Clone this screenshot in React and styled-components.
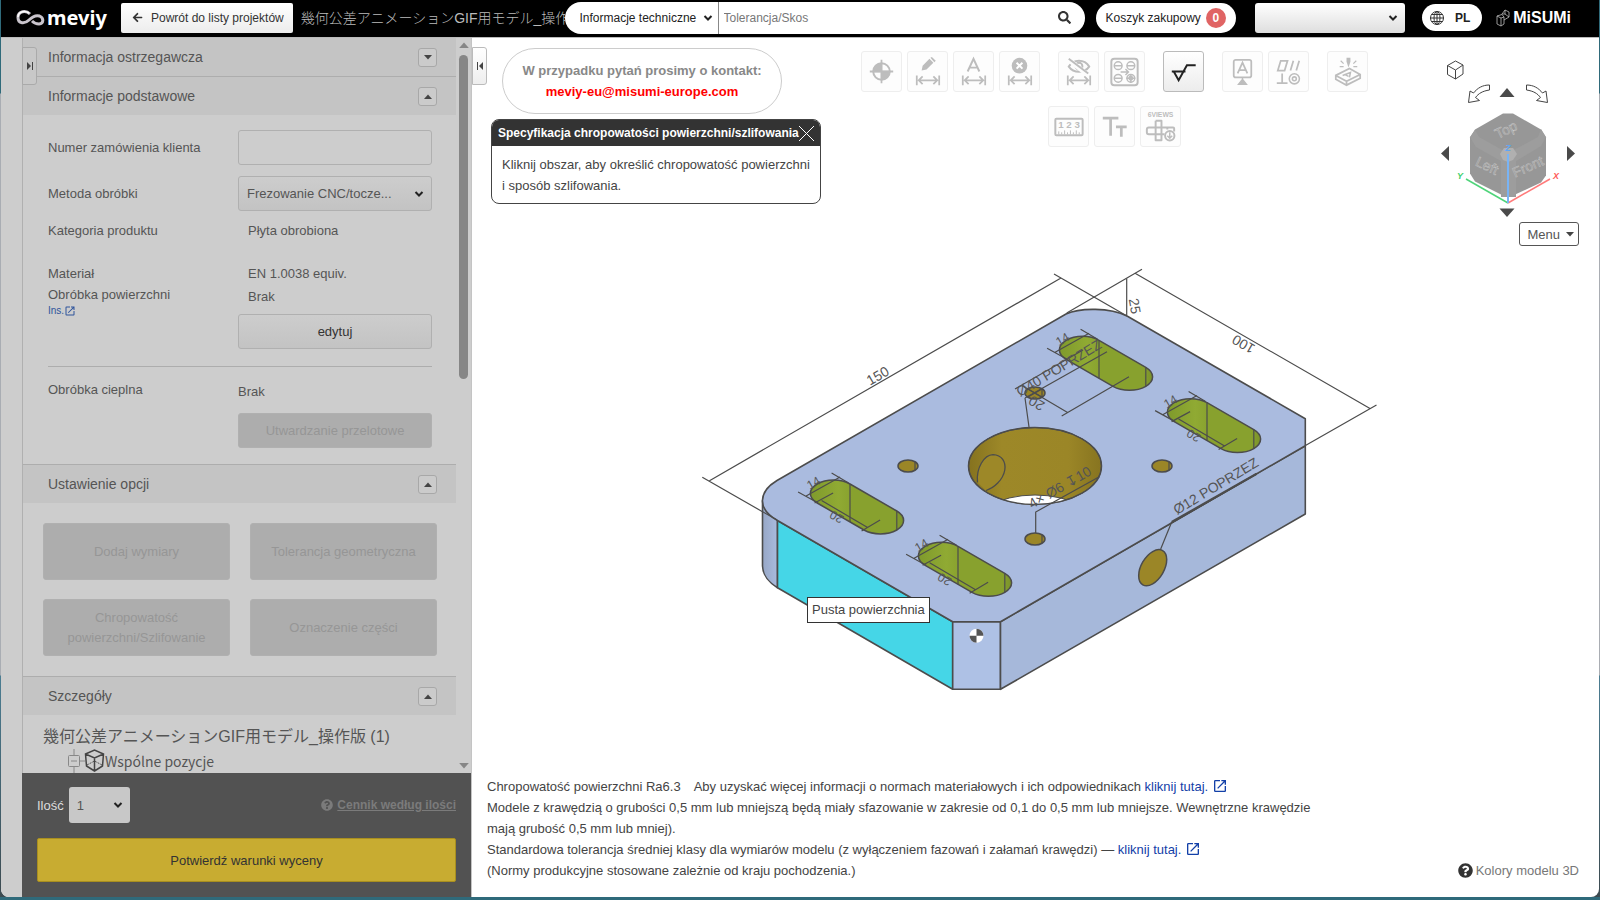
import React from "react";
import styled, { createGlobalStyle } from "styled-components";
import { FaArrowLeft, FaSearch, FaQuestionCircle } from "react-icons/fa";
import { MdOpenInNew } from "react-icons/md";

const GlobalStyle = createGlobalStyle`
  * {
    box-sizing: border-box;
  }
  body {
    margin: 0;
    background: linear-gradient(#2f6a7a 0, #2f6a7a 93px, #a9adb3 94px, #a9adb3 675px, #4b7d92 676px, #3c4a50 100%);
    font-family: "Liberation Sans", Arial, "Noto Sans CJK JP", sans-serif;
    font-size: 13px;
    color: #444;
  }
  button, input, select {
    font-family: inherit;
    font-size: inherit;
    margin: 0;
  }
`;

// Window
const Window = styled.div`
  display: flex;
  flex-direction: column;
  height: calc(100vh - 3px);
  margin: 0 1px;
  background: #fff;
  border-radius: 0 0 8px 8px;
  overflow: hidden;
`;

const Body = styled.div`
  display: flex;
  flex: 1;
  min-height: 0;
`;

// Header
const Header = styled.header`
  display: flex;
  align-items: center;
  height: 38px;
  padding: 0 28px 2px 15px;
  background: #000;
  border-bottom: 1px solid #bbb;
  font-size: 12px;
`;

const Logo = styled.div`
  display: flex;
  align-items: center;
  gap: 2px;
  width: 105px;
  color: #fff;
  font: bold 20px/30px "Noto Sans", sans-serif;
`;

const BackButton = styled.button`
  display: flex;
  align-items: center;
  gap: 8px;
  height: 30px;
  padding: 0 9px 0 11px;
  border: 0;
  border-radius: 2px;
  background: linear-gradient(#fff, #ececec);
  color: #333;
  white-space: nowrap;
`;

const ProjectName = styled.div`
  flex: 1;
  min-width: 0;
  margin-left: 8px;
  overflow: hidden;
  white-space: nowrap;
  font-weight: 300;
  font-size: 14px;
  line-height: 30px;
  color: #bbb;
`;

const SearchBox = styled.div`
  display: flex;
  align-items: center;
  width: 520px;
  height: 32px;
  padding-right: 14px;
  border-radius: 16px;
  background: #fff;
  color: #333;
`;

const SearchInput = styled.input`
  flex: 1;
  height: 32px;
  padding: 0 5px;
  border: 0;
  border-left: 1px solid #888;
  background: transparent;
  &::placeholder {
    color: #777;
  }
`;

const IconButton = styled.button`
  display: flex;
  padding: 0;
  border: 0;
  background: transparent;
  color: #333;
`;

const CartButton = styled.button`
  display: flex;
  align-items: center;
  gap: 5px;
  height: 30px;
  margin-left: 11px;
  padding: 0 10px;
  border: 0;
  border-radius: 15px;
  background: #fff;
  color: #222;
`;

const Badge = styled.span`
  width: 20px;
  height: 20px;
  border-radius: 10px;
  background: #e06464;
  color: #fff;
  font-weight: bold;
  line-height: 20px;
  text-align: center;
`;

const LangButton = styled.button`
  display: flex;
  align-items: center;
  gap: 11px;
  height: 27px;
  margin: 0 14px 0 17px;
  padding: 0 12px 0 8px;
  border: 0;
  border-radius: 14px;
  background: #fff;
  color: #222;
  font-weight: bold;
`;

const Brand = styled.div`
  display: flex;
  align-items: center;
  gap: 3px;
  color: #fff;
  font-size: 16px;
  font-weight: bold;
  line-height: 30px;
`;

// Drop-down with its own chevron
const SelectWrap = styled.span`
  display: grid;
  align-items: center;
  width: ${(p) => p.$width};
  margin-left: ${(p) => p.$left || "0"};
  select,
  svg {
    grid-area: 1 / 1;
  }
  svg {
    justify-self: end;
    margin-right: ${(p) => p.$chevron || "7px"};
    pointer-events: none;
  }
`;

const SelectField = styled.select`
  appearance: none;
  width: 100%;
  height: ${(p) => p.$height || "36px"};
  padding: 0 8px 0 ${(p) => p.$indent || "8px"};
  border: ${(p) => (p.$plain ? "0" : "1px solid #b0b0b0")};
  border-radius: 3px;
  background: ${(p) => p.$bg || "linear-gradient(#cdcdcd, #c3c3c3)"};
  color: ${(p) => p.$color || "#555"};
`;

// Sidebar
const Sidebar = styled.aside`
  display: flex;
  flex-direction: column;
  width: 471px;
  padding-left: 21px;
  background: #cdcdcd;
  border-right: 1px solid #c4c4c4;
  color: #555;
`;

const SidebarScroll = styled.div`
  display: flex;
  flex: 1;
  min-height: 0;
  overflow: hidden;
`;

const Panel = styled.div`
  position: relative;
  flex: 1;
  border-left: 1px solid #b0b0b0;
`;

const ScrollTrack = styled.div`
  display: flex;
  flex-direction: column;
  align-items: center;
  justify-content: space-between;
  width: 15px;
  padding: 4px 0;
`;

const ScrollThumb = styled.div`
  width: 9px;
  height: 324px;
  margin: 7px 0 auto;
  border-radius: 5px;
  background: #868686;
`;

const FoldTab = styled.button`
  position: absolute;
  top: 9px;
  left: ${(p) => (p.$dark ? "-1px" : "0")};
  z-index: 1;
  display: flex;
  align-items: center;
  justify-content: center;
  width: 15px;
  height: 38px;
  padding: 0;
  border: 1px solid ${(p) => (p.$dark ? "#aaa" : "#bbb")};
  border-radius: 0 3px 3px 0;
  background: ${(p) => (p.$dark ? "#c8c8c8" : "linear-gradient(#fff, #eee)")};
`;

const SectionHead = styled.h2`
  display: flex;
  align-items: center;
  justify-content: space-between;
  height: ${(p) => (p.$line ? "39px" : "38px")};
  margin: 0;
  padding: 0 19px 0 25px;
  border-top: ${(p) => (p.$line ? "1px solid #adadad" : "0")};
  background: #c4c4c4;
  font-size: 14px;
  font-weight: normal;
`;

const FoldButton = styled.button`
  display: flex;
  align-items: center;
  justify-content: center;
  width: 19px;
  height: 19px;
  padding: 0;
  border: 1px solid #a8a8a8;
  border-radius: 3px;
  background: #cbcbcb;
`;

const Form = styled.div`
  display: flex;
  flex-direction: column;
  padding: 15px 24px 16px 25px;
`;

const Row = styled.div`
  display: grid;
  grid-template-columns: 190px 1fr;
  align-items: ${(p) => (p.$top ? "start" : "center")};
  min-height: ${(p) => p.$height};
  margin-bottom: ${(p) => p.$gap || "0"};
  line-height: 21px;
`;

const Value = styled.div`
  padding-left: ${(p) => (p.$flush ? "0" : "10px")};
`;

const ValueStack = styled.div`
  display: flex;
  flex-direction: column;
  gap: ${(p) => p.$gap};
  padding-top: 2px;
`;

const TextInput = styled.input`
  width: 100%;
  height: 35px;
  padding: 0 8px;
  border: 1px solid #b0b0b0;
  border-radius: 3px;
  background: #cdcdcd;
`;

const Button = styled.button`
  width: 100%;
  height: ${(p) => p.$height || "35px"};
  padding: 0 20px;
  border: 1px solid #b0b0b0;
  border-radius: 3px;
  background: linear-gradient(#cdcdcd, #c3c3c3);
  color: #333;
  line-height: 20px;
  &:disabled {
    background: #adadad;
    color: #969696;
  }
`;

const SmallLink = styled.a`
  display: flex;
  align-items: center;
  color: #2f549c;
  font-size: 10px;
  line-height: 12px;
  text-decoration: none;
`;

const Rule = styled.hr`
  width: 100%;
  margin: 17px 0 12px;
  border: 0;
  border-top: 1px solid #adadad;
`;

const OptionGrid = styled.div`
  display: grid;
  grid-template-columns: 1fr 1fr;
  gap: 19px 20px;
  padding: 20px 19px 20px 20px;
`;

const Tree = styled.div`
  padding: 10px 20px 0;
  font-size: 16px;
  line-height: 24px;
  white-space: nowrap;
`;

const TreeItem = styled.div`
  display: flex;
  align-items: center;
  padding-left: 24px;
  font-family: "Noto Sans CJK JP", sans-serif;
  font-size: 14px;
`;

const OrderBar = styled.div`
  display: flex;
  flex-direction: column;
  gap: 15px;
  height: 124px;
  padding: 14px 15px;
  background: #525252;
  color: #ddd;
`;

const OrderRow = styled.div`
  display: flex;
  align-items: center;
`;

const PriceLink = styled.a`
  display: flex;
  align-items: center;
  gap: 4px;
  margin-left: auto;
  color: #7b7b7b;
  font-size: 12px;
  font-weight: bold;
`;

const ConfirmButton = styled.button`
  height: 44px;
  border: 1px solid #a98f1f;
  border-radius: 2px;
  background: #c8ac31;
  color: #333;
`;

// Model view
const Main = styled.main`
  position: relative;
  display: flex;
  flex: 1;
  flex-direction: column;
  min-width: 0;
`;

const TopArea = styled.div`
  display: flex;
  height: 212px;
  padding: 10px 19px 0;
`;

const HintColumn = styled.div`
  width: 330px;
`;

const Contact = styled.div`
  width: 280px;
  margin-left: 11px;
  padding: 11px 0;
  border: 1px solid #ccc;
  border-radius: 33px;
  color: #888;
  font-weight: bold;
  line-height: 21px;
  text-align: center;
  a {
    color: #f00;
    text-decoration: none;
  }
`;

const Dialog = styled.section`
  margin-top: 5px;
  border: 1px solid #444;
  border-radius: 8px;
  overflow: hidden;
`;

const DialogTitle = styled.h3`
  display: flex;
  align-items: center;
  justify-content: space-between;
  height: 26px;
  margin: 0;
  padding: 0 7px 0 6px;
  background: #333;
  color: #fff;
  font-size: 12px;
  white-space: nowrap;
`;

const DialogText = styled.p`
  margin: 0;
  padding: 8px 8px 7px 10px;
  line-height: 21px;
`;

const Toolbar = styled.div`
  display: flex;
  flex: 1;
  flex-direction: column;
  gap: 14px;
  padding: 3px 41px 0 13px;
`;

const ToolRow = styled.div`
  display: flex;
  justify-content: center;
  gap: 18px;
`;

const ToolGroup = styled.div`
  display: flex;
  gap: 5px;
`;

const ToolButton = styled.button`
  width: 41px;
  height: 41px;
  padding: 0;
  border: 1px solid ${(p) => (p.$active ? "#bbb" : "#eee")};
  border-radius: 3px;
  background: ${(p) => (p.$active ? "linear-gradient(#fff, #ececec)" : "#fdfdfd")};
  color: ${(p) => (p.$active ? "#222" : "#bdbdbd")};
  svg {
    display: block;
  }
`;

const ViewColumn = styled.div`
  display: flex;
  flex-direction: column;
  align-items: flex-end;
  gap: 2px;
  padding-top: 8px;
`;

const MenuButton = styled.button`
  display: flex;
  align-items: center;
  gap: 6px;
  height: 24px;
  margin-right: 1px;
  padding: 0 4px 0 7px;
  border: 1px solid #555;
  border-radius: 3px;
  background: #fff;
  color: #555;
`;

const Canvas = styled.div`
  position: relative;
  flex: 1;
  min-height: 0;
  & > svg {
    display: block;
    width: 100%;
    height: 100%;
  }
`;

const FaceTip = styled.div`
  position: absolute;
  top: 347px;
  left: 335px;
  padding: 0 4px;
  border: 1px solid #333;
  background: #fff;
  line-height: 24px;
`;

const NotesRow = styled.footer`
  display: flex;
  align-items: flex-end;
  justify-content: space-between;
  padding: 6px 20px 16px 15px;
  line-height: 21px;
`;

const Notes = styled.div`
  max-width: 850px;
  p {
    margin: 0;
  }
  a {
    color: #1340a8;
    text-decoration: none;
  }
  svg {
    margin-left: 4px;
    vertical-align: -3px;
    stroke: currentColor;
  }
`;

const ColorsLink = styled.a`
  display: flex;
  align-items: center;
  gap: 3px;
  color: #777;
  text-decoration: none;
  svg {
    color: #333;
  }
`;

const Chevron = () => (
  <svg width="10" height="8" viewBox="0 0 10 8" fill="none" stroke="#222" strokeWidth="2">
    <path d="M1.5 2L5 5.5 8.500 2" />
  </svg>
);

const Triangle = ({ up, color = "#444", size = 8 }) => (
  <svg width={size} height={size / 2 + 1} viewBox="0 0 8 5" fill={color}>
    <path d={up ? "M0 5L4 0.5L8 5Z" : "M0 0L4 4.5L8 0Z"} />
  </svg>
);

const Section = ({ title, open, line }) => (
  <SectionHead $line={line}>
    {title}
    <FoldButton aria-label={title}>
      <Triangle up={open} />
    </FoldButton>
  </SectionHead>
);

const FoldIcon = ({ flip }) => (
  <svg width="8" height="8" viewBox="0 0 8 8" fill="#444">
    <path d={flip ? "M1 0v8L5 4ZM6 0h1v8H6Z" : "M7 0v8L3 4ZM1 0h1v8H1Z"} />
  </svg>
);

const Dim = () => (
  <path d="M9 24v10M32 24v10M11 29h19M15 25l-4 4 4 4M26 25l4 4-4 4" strokeWidth="1.8" />
);

const toolIcons = {
  origin: (
    <>
      <circle cx="20" cy="20" r="8.5" strokeWidth="2" />
      <path d="M20 8v24M8 20h24" strokeWidth="1.8" />
      <path d="M20 20v-8a8 8 0 0 0-8 8ZM20 20v8a8 8 0 0 0 8-8Z" fill="currentColor" />
    </>
  ),
  edit: (
    <>
      <Dim />
      <path d="M14 19l1-5 7-7 4 4-7 7ZM23 6l1.5-1 4 4-1.5 1.5Z" fill="currentColor" stroke="none" />
    </>
  ),
  text: (
    <>
      <Dim />
      <path d="M14 20l6-13 6 13M16 16h8" strokeWidth="2" />
    </>
  ),
  remove: (
    <>
      <Dim />
      <circle cx="20" cy="14" r="8" fill="currentColor" stroke="none" />
      <path d="M17 11l6 6M23 11l-6 6" stroke="#fff" strokeWidth="2" />
    </>
  ),
  hide: (
    <>
      <Dim />
      <path d="M10 15c5-8 16-8 21 0c-5 7-16 7-21 0Z" strokeWidth="2" />
      <circle cx="20.5" cy="14.5" r="3.5" strokeWidth="2" />
      <path d="M10 8l19 15" stroke="#fdfdfd" strokeWidth="5" />
      <path d="M10 7l20 15" strokeWidth="2" />
    </>
  ),
  holes: (
    <>
      <rect x="6.5" y="7" width="27" height="27" rx="3" strokeWidth="2" />
      <circle cx="13.5" cy="14" r="4" />
      <circle cx="26.5" cy="14" r="4" />
      <circle cx="13.5" cy="27" r="4" />
      <circle cx="26.5" cy="27" r="4" />
      <circle cx="26.5" cy="27" r="1.8" fill="currentColor" />
      <path d="M9.5 14h8M22.5 14h8M9.5 27h8M22 27h9M26.5 22.5v9M16 20.5h8M21 17.5l3 3-3 3" />
    </>
  ),
  rough: <path d="M8 20h14M10 20l5 9 8.5-15.5h9" strokeWidth="2" />,
  datum: (
    <>
      <rect x="11" y="8" width="18" height="18" rx="2" strokeWidth="1.8" />
      <path d="M15 22l5-11 5 11M16.5 18.5h7" strokeWidth="1.8" />
      <path d="M20 26v3M16 33l4-5 4 5Z" fill="currentColor" />
    </>
  ),
  geometric: (
    <>
      <path d="M12 9h7l-3 10h-7ZM25 9l-3 10M31 9l-3 10M13.5 22v10M8 32h11" strokeWidth="1.8" />
      <circle cx="26" cy="27.5" r="5.2" strokeWidth="1.6" />
      <circle cx="26" cy="27.5" r="2" strokeWidth="1.6" />
    </>
  ),
  engrave: (
    <>
      <path d="M8 24l14-7 11 6v4l-14 7-11-6ZM8 24l11 6 14-7M19 30v4" strokeWidth="1.8" />
      <path d="M15 24l8-3-1 5M17 23l4 2" strokeWidth="1.6" />
      <path d="M19 6h4v4l-2 6-2-6Z" fill="currentColor" stroke="none" />
      <path d="M13 9l3 3M29 9l-3 3M12 15h4M26 15h4" strokeWidth="1.2" />
    </>
  ),
  ruler: (
    <>
      <rect x="6.5" y="12" width="28" height="17" rx="1" strokeWidth="2" />
      <path d="M10 28v-3M13 28v-2M16 28v-4M19 28v-2M22 28v-4M25 28v-2M28 28v-4M31 28v-2" strokeWidth="1" />
      <text x="20.5" y="22" fontSize="10" fontWeight="bold" textAnchor="middle" fill="currentColor" stroke="none">
        1 2 3
      </text>
    </>
  ),
  font: <path d="M8 11.5h16M16 11.5v18M21.5 20.5h11M27 20.5v10" strokeWidth="2.8" />,
  views: (
    <>
      <text x="20" y="10" fontSize="7" fontWeight="bold" textAnchor="middle" fill="currentColor" stroke="none">
        6VIEWS
      </text>
      <path
        d="M15 14h6v7h12q1 0 1 1v3M15 14v7H8q-2 0-2 2v3q0 2 2 2h7v6h6v-6h3M15 21h6v7h-6ZM27 21v2"
        strokeWidth="2"
        strokeLinejoin="round"
      />
      <circle cx="29.5" cy="29.5" r="4.8" strokeWidth="2" />
      <path d="M29.5 26v6M27 29.5l2.5 2.5 2.5-2.5" />
    </>
  ),
};

const toolRows = [
  [
    ["origin", "edit", "text", "remove"],
    ["hide", "holes"],
    ["rough"],
    ["datum", "geometric"],
    ["engrave"],
  ],
  [["ruler", "font", "views"]],
];

const Tool = ({ name }) => (
  <ToolButton $active={name === "rough"} aria-label={name}>
    <svg width="39" height="39" viewBox="0 0 40 40" fill="none" stroke="currentColor" strokeWidth="1.5">
      {toolIcons[name]}
    </svg>
  </ToolButton>
);

const ViewCube = () => (
  <svg width="144" height="164" viewBox="1436 56 144 164">
    <g fill="none" stroke="#444" strokeLinejoin="round">
      <path d="M1447.5 65.5l8-4.5 7.5 4v9l-7.5 5-8-4.5ZM1447.5 65.5l8 4.5 7.5-5M1455.5 70v9" />
      <path d="M1489.5 85c-7 0-12 3-16 8l-3.5-2-1.5 11.5 11-2-4-3c3-4 7-6.5 14-7.5Z" />
      <path d="M1526.5 85c7 0 12 3 16 8l3.5-2 1.5 11.5-11-2 4-3c-3-4-7-6.5-14-7.5Z" />
    </g>
    <g fill="#4a4a4a">
      <path d="M1499.5 97l7.5-9 7.5 9Z" />
      <path d="M1499.5 208.5h15l-7.5 8.5Z" />
      <path d="M1449 146v15l-8-7.5Z" />
      <path d="M1567 146v15l8-7.5Z" />
    </g>
    <path d="M1503 113.5h10l28 16 5 8v38l-5 7-28 13h-10l-28-14-5-8v-36l5-8Z" fill="#979797" />
    <path d="M1475 130l4 7 25 14 4-2 4 2 26-14 3-8 5 8-5 9-25 15v36h-15v-36l-25-14-6-10Z" fill="#9d9d9d" />
    <path d="M1504 148h9l4 6-4 6-5 2-5-2-3-6Z" fill="#b0b0b0" />
    <g fill="#9a9a9a" stroke="#c9c9c9" strokeWidth="0.4" textAnchor="middle" fontSize="14">
      <text transform="translate(1508 134) rotate(-26)">Top</text>
      <text transform="translate(1485 170) rotate(26)">Left</text>
      <text transform="translate(1530 171) rotate(-24)">Front</text>
    </g>
    <g fill="none" strokeWidth="1.5">
      <path d="M1508 203l-42-24" stroke="#4fd47a" />
      <path d="M1508 203l42-24" stroke="#ff7a7a" />
      <path d="M1508 203v-49" stroke="#79b4f5" strokeWidth="2" />
    </g>
    <g fontSize="9" fontWeight="bold" fontStyle="italic" textAnchor="middle">
      <text x="1460" y="179" fill="#3fcf6c">Y</text>
      <text x="1556" y="179" fill="#ff5c5c">X</text>
      <text x="1508" y="151" fill="#5fa6f5">Z</text>
    </g>
  </svg>
);

const Labels = styled.g`
  text {
    fill: #555;
    stroke: none;
    font-size: 12px;
    text-anchor: middle;
  }
`;

const Annotations = styled.g`
  fill: #555;
  stroke: none;
  font-size: 14px;
`;

const SLOT = "M16.4 -9.5L63.2 17.5A23.15 13.4 0 0 1 30.4 36.5L-16.4 9.5A23.15 13.4 0 0 1 16.4 -9.5Z";

const Slot = ({ x, y, short }) => (
  <g transform={`translate(${x} ${y})`}>
    <path d={SLOT} fill="url(#slotFill)" strokeWidth="1.5" />
    <path d="M16.4 -9.5v38M63.2 17.5v19" />
    <path d="M-35.5 -1.5l20 11M-2 -20.5l17 10M-27.5 2.5L6.5 -16.5" />
    <text transform="translate(-18 -7) rotate(-30)">14</text>
    {!short && (
      <>
        <path d="M-12 7L34 34M-19 9.5l18.5 -10M28 37.5l18.5 -11" />
        <text transform="translate(5 20) rotate(210)">20</text>
      </>
    )}
  </g>
);

const Hole = ({ x, y }) => (
  <g>
    <ellipse cx={x} cy={y} rx="10" ry="6" fill="#9b8627" strokeWidth="1.5" />
    <path d={`M${x + 7} ${y - 4}v8`} />
  </g>
);

const Model = () => (
  <svg viewBox="472 250 1127 520" stroke="#4c4c4c" fill="none" role="img" aria-label="Model 3D">
    <defs>
      <linearGradient id="slotFill">
        <stop offset="0" stopColor="#7f9a2c" />
        <stop offset="0.3" stopColor="#90aa33" />
        <stop offset="0.45" stopColor="#88a12e" />
        <stop offset="0.9" stopColor="#88a12e" />
        <stop offset="1" stopColor="#7a922a" />
      </linearGradient>
      <linearGradient id="boreFill">
        <stop offset="0" stopColor="#85721f" />
        <stop offset="0.25" stopColor="#9d8828" />
        <stop offset="0.75" stopColor="#9b8627" />
        <stop offset="1" stopColor="#877420" />
      </linearGradient>
      <linearGradient id="roundFill">
        <stop offset="0" stopColor="#97a7c6" />
        <stop offset="1" stopColor="#a9bbde" />
      </linearGradient>
      <clipPath id="boreClip">
        <ellipse cx="1035" cy="466" rx="66.5" ry="38.5" />
      </clipPath>
    </defs>
    <g strokeWidth="1.6" strokeLinejoin="round">
      <path d="M762.5 501V566C763 576 768 582 777.5 587.7V520Z" fill="url(#roundFill)" />
      <path d="M777.5 520.5L952.7 621.7V689.3L777.5 587.7Z" fill="#45d6e7" />
      <path d="M952.7 621.7H1000.5V689.3H952.7Z" fill="#aec1e5" />
      <path d="M1000.5 621.7L1305.3 445.7V514L1000.5 689.3Z" fill="#a6b8da" />
      <path
        d="M777 480.5L1066 314C1080 307.5 1110 307.5 1127 316L1305.3 418.7V445.7L1000.5 621.7H952.7L777.5 520.5C757 509 758 492 777 480.5Z"
        fill="#aabbdf"
      />
    </g>
    <ellipse cx="1035" cy="466" rx="66.5" ry="38.5" fill="url(#boreFill)" />
    <ellipse cx="1035" cy="533.5" rx="66.5" ry="38.5" fill="#fff" clipPath="url(#boreClip)" />
    <ellipse cx="1035" cy="466" rx="66.5" ry="38.5" strokeWidth="1.5" />
    <path
      d="M977.5 482.5C976 468 984 455 993 454.7C1002 455 1006 462 1004.8 470C1003 480 994 488 986 490.5"
      fill="#9d8828"
      strokeWidth="1.3"
    />
    <Labels strokeWidth="1.2">
      <Slot x={833.6} y={493.5} />
      <Slot x={941.6} y={555.8} />
      <Slot x={1082.6} y={349.8} short />
      <Slot x={1190.6} y={412.1} />
      <Hole x={1035} y={393} />
      <Hole x={908} y={466} />
      <Hole x={1162} y={466} />
      <Hole x={1035} y={539} />
      <path d="M1028 389l14 8M1042 389l-14 8" />
    </Labels>
    <ellipse
      cx="1152.7"
      cy="567.7"
      rx="19.8"
      ry="11.45"
      transform="rotate(-60 1152.7 567.7)"
      fill="#9b8627"
      strokeWidth="1.5"
    />
    {/* dimension lines */}
    <g strokeWidth="1.2">
      <path d="M709.5 480.7L1061 278M702.3 477.3L777 520M1054 274L1127 316" />
      <path d="M1135.5 273.5L1370 408.5M1066.7 313L1142 269.3M1305 445.7L1376.5 405" />
      <path d="M1126.7 278.5V315" />
      <path d="M1015 389L1083 350M1025 398L1107 351.7M1061.7 416L1129 376.7M1021 385L1068 412.7M1025 398L1029 427" />
      <path d="M1035.7 533V512L1099.3 476.7" />
      <path d="M1171.7 522L1160.7 549" />
      <path d="M1171.7 522L1256.7 473.7" strokeWidth="2.2" />
    </g>
    <Annotations>
      <text transform="translate(880 380) rotate(-30)" textAnchor="middle">150</text>
      <text transform="translate(1246 340) rotate(210)" textAnchor="middle">100</text>
      <text transform="translate(1130 307) rotate(80)" textAnchor="middle">25</text>
      <text transform="translate(1039 399) rotate(210)" textAnchor="middle">20</text>
      <text transform="translate(1020 397) rotate(-31)">Ø40 POPRZEZ</text>
      <text transform="translate(1032 509) rotate(-30)">4× Ø6 ↧10</text>
      <text transform="translate(1177 515) rotate(-31)">Ø12 POPRZEZ</text>
    </Annotations>
    <g stroke="none">
      <circle cx="976.5" cy="635.7" r="7" fill="#fff" />
      <path
        d="M976.5 635.7V628.7A7 7 0 0 1 983.5 635.7ZM976.5 635.7V642.7A7 7 0 0 1 969.5 635.7Z"
        fill="#555"
      />
    </g>
  </svg>
);

const SideMenu = () => (
  <Sidebar>
    <SidebarScroll>
      <Panel>
        <FoldTab $dark aria-label="Rozwiń panel">
          <FoldIcon flip />
        </FoldTab>
        <Section title="Informacja ostrzegawcza" />
        <Section title="Informacje podstawowe" open line />
        <Form>
          <Row $height="35px" $gap="11px">
            <label htmlFor="order">Numer zamówienia klienta</label>
            <TextInput id="order" />
          </Row>
          <Row $height="35px" $gap="9px">
            <label htmlFor="method">Metoda obróbki</label>
            <SelectWrap $width="100%" $chevron="8px">
              <SelectField id="method" $height="35px">
                <option>Frezowanie CNC/tocze...</option>
              </SelectField>
              <Chevron />
            </SelectWrap>
          </Row>
          <Row $height="21px" $gap="22px">
            <div>Kategoria produktu</div>
            <Value>Płyta obrobiona</Value>
          </Row>
          <Row $height="21px">
            <div>Materiał</div>
            <Value>EN 1.0038 equiv.</Value>
          </Row>
          <Row $height="65px" $top>
            <div>
              Obróbka powierzchni
              <SmallLink href="#ins">
                Ins.
                <MdOpenInNew size={12} />
              </SmallLink>
            </div>
            <ValueStack $gap="7px">
              <Value>Brak</Value>
              <Button>edytuj</Button>
            </ValueStack>
          </Row>
          <Rule />
          <Row $height="69px" $top>
            <div>Obróbka cieplna</div>
            <ValueStack $gap="11px">
              <Value $flush>Brak</Value>
              <Button disabled>Utwardzanie przelotowe</Button>
            </ValueStack>
          </Row>
        </Form>
        <Section title="Ustawienie opcji" open line />
        <OptionGrid>
          <Button disabled $height="57px">Dodaj wymiary</Button>
          <Button disabled $height="57px">Tolerancja geometryczna</Button>
          <Button disabled $height="57px">Chropowatość powierzchni/Szlifowanie</Button>
          <Button disabled $height="57px">Oznaczenie części</Button>
        </OptionGrid>
        <Section title="Szczegóły" open line />
        <Tree>
          幾何公差アニメーションGIF用モデル_操作版 (1)
          <TreeItem>
            <svg width="38" height="24" viewBox="0 0 38 24" fill="none" stroke="#888">
              <path d="M7 0v6M7 18v6M13 12h5M4 12h6" />
              <rect x="1.5" y="6.5" width="11" height="11" rx="1" />
              <path
                d="M18.5 5l9-4 9 4-1 12-8 5-8-5ZM18.5 5l9 4 9-4M27.5 9v13"
                stroke="#444"
                strokeWidth="1.5"
              />
              <path d="M20 16l7.5-4 7.5 4" stroke="#555" strokeDasharray="2 1" />
            </svg>
            Wspólne pozycje
          </TreeItem>
        </Tree>
      </Panel>
      <ScrollTrack>
        <Triangle up color="#868686" size={10} />
        <ScrollThumb />
        <Triangle color="#868686" size={10} />
      </ScrollTrack>
    </SidebarScroll>
    <OrderBar>
      <OrderRow>
        <label htmlFor="qty">Ilość</label>
        <SelectWrap $width="61px" $left="5px">
          <SelectField id="qty" $plain $bg="#c8c8c8">
            <option>1</option>
          </SelectField>
          <Chevron />
        </SelectWrap>
        <PriceLink href="#price">
          <FaQuestionCircle size={12} />
          Cennik według ilości
        </PriceLink>
      </OrderRow>
      <ConfirmButton>Potwierdź warunki wyceny</ConfirmButton>
    </OrderBar>
  </Sidebar>
);

const TopBar = () => (
  <Header>
    <Logo>
      <svg width="29" height="16" viewBox="0 0 29 16" fill="none" stroke="#c9c4cc" strokeWidth="3">
        <path d="M14 4C10 0 2 1 2 7.5C2 14 9 14 13 10C17 6 20 5 23.5 6C28 8 28 13.5 23 14C20 14 18 13 16 11" />
        <path d="M2 7C2 2 8 0 13 3" stroke="#fff" strokeWidth="1.5" />
      </svg>
      meviy
    </Logo>
    <BackButton>
      <FaArrowLeft size={11} />
      Powrót do listy projektów
    </BackButton>
    <ProjectName>幾何公差アニメーションGIF用モデル_操作版</ProjectName>
    <SearchBox>
      <SelectWrap $width="153px" $chevron="5px">
        <SelectField $plain $bg="transparent" $height="32px" $indent="15px" $color="#222" aria-label="Zakres">
          <option>Informacje techniczne</option>
        </SelectField>
        <Chevron />
      </SelectWrap>
      <SearchInput placeholder="Tolerancja/Skos" aria-label="Szukaj" />
      <IconButton aria-label="Szukaj">
        <FaSearch size={13} />
      </IconButton>
    </SearchBox>
    <CartButton>
      Koszyk zakupowy
      <Badge>0</Badge>
    </CartButton>
    <SelectWrap $width="150px" $left="19px">
      <SelectField $plain $bg="linear-gradient(#fff, #dedede)" $height="30px" aria-label="Konto" />
      <Chevron />
    </SelectWrap>
    <LangButton>
      <svg width="14" height="14" viewBox="0 0 14 14" fill="none" stroke="#333">
        <circle cx="7" cy="7" r="6.5" />
        <ellipse cx="7" cy="7" rx="3" ry="6.5" />
        <path d="M7 0v14M0 7h14M1.5 3.5h11M1.5 10.5h11" />
      </svg>
      PL
    </LangButton>
    <Brand>
      <svg width="14" height="18" viewBox="0 0 14 18" fill="none" stroke="#bbb" strokeWidth="0.8">
        <path d="M1 7l5-1.5 2 2.5v7l-3 2-4-2ZM1 7l4 2 3-1M5 9v8M6 5l3-4 4 2v5l-5 3M9 1v4l4 3M6 5h3" />
      </svg>
      MiSUMi
    </Brand>
  </Header>
);

const App = () => {
  return (
    <>
      <GlobalStyle />
      <Window>
        <TopBar />
        <Body>
          <SideMenu />
          <Main>
            <FoldTab aria-label="Zwiń panel">
              <FoldIcon />
            </FoldTab>
            <TopArea>
              <HintColumn>
                <Contact>
                  W przypadku pytań prosimy o kontakt:
                  <br />
                  <a href="mailto:meviy-eu@misumi-europe.com">meviy-eu@misumi-europe.com</a>
                </Contact>
                <Dialog>
                  <DialogTitle>
                    Specyfikacja chropowatości powierzchni/szlifowania
                    <IconButton aria-label="Zamknij">
                      <svg width="15" height="15" viewBox="0 0 15 15" stroke="#fff">
                        <path d="M0 0l15 15M15 0L0 15" />
                      </svg>
                    </IconButton>
                  </DialogTitle>
                  <DialogText>
                    Kliknij obszar, aby określić chropowatość powierzchni i sposób szlifowania.
                  </DialogText>
                </Dialog>
              </HintColumn>
              <Toolbar>
                {toolRows.map((groups, r) => (
                  <ToolRow key={r}>
                    {groups.map((names) => (
                      <ToolGroup key={names[0]}>
                        {names.map((name) => (
                          <Tool key={name} name={name} />
                        ))}
                      </ToolGroup>
                    ))}
                  </ToolRow>
                ))}
              </Toolbar>
              <ViewColumn>
                <ViewCube />
                <MenuButton>
                  Menu
                  <Triangle />
                </MenuButton>
              </ViewColumn>
            </TopArea>
            <Canvas>
              <Model />
              <FaceTip>Pusta powierzchnia</FaceTip>
            </Canvas>
            <NotesRow>
              <Notes>
                <p>
                  Chropowatość powierzchni Ra6.3{"\u3000"}Aby uzyskać więcej informacji o normach
                  materiałowych i ich odpowiednikach{" "}
                  <a href="#materials">
                    kliknij tutaj.
                    <MdOpenInNew size={16} />
                  </a>
                </p>
                <p>
                  Modele z krawędzią o grubości 0,5 mm lub mniejszą będą miały sfazowanie w zakresie
                  od 0,1 do 0,5 mm lub mniejsze. Wewnętrzne krawędzie mają grubość 0,5 mm lub mniej).
                </p>
                <p>
                  Standardowa tolerancja średniej klasy dla wymiarów modelu (z wyłączeniem fazowań i
                  załamań krawędzi) —{" "}
                  <a href="#tolerance">
                    kliknij tutaj.
                    <MdOpenInNew size={16} />
                  </a>
                </p>
                <p>(Normy produkcyjne stosowane zależnie od kraju pochodzenia.)</p>
              </Notes>
              <ColorsLink href="#colors">
                <FaQuestionCircle size={15} />
                Kolory modelu 3D
              </ColorsLink>
            </NotesRow>
          </Main>
        </Body>
      </Window>
    </>
  );
};

export default App;
